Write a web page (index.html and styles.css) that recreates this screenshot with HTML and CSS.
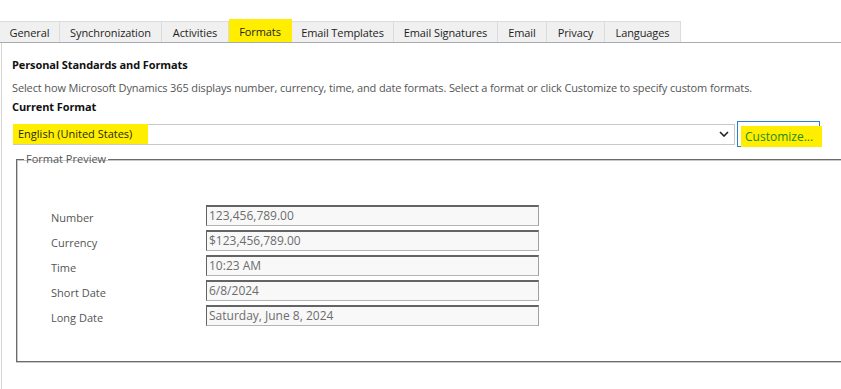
FILE: index.html
```html
<!DOCTYPE html>
<html lang="en">
<head>
    <meta charset="UTF-8">
    <meta name="viewport" content="width=device-width, initial-scale=1.0">
    <title>Set Personal Options</title>
    <link rel="stylesheet" href="styles.css">
</head>
<body>

    <ul class="tabs">
        <li class="tab-general">General</li>
        <li class="tab-sync">Synchronization</li>
        <li class="tab-activities">Activities</li>
        <li class="tab-formats active">Formats</li>
        <li class="tab-templates">Email Templates</li>
        <li class="tab-signatures">Email Signatures</li>
        <li class="tab-email">Email</li>
        <li class="tab-privacy">Privacy</li>
        <li class="tab-languages">Languages</li>
    </ul>

    <div class="panel">
        <h3 class="title">Personal Standards and Formats</h3>
        <p class="desc">Select how Microsoft Dynamics 365 displays number, currency, time, and date formats. Select a format or click Customize to specify custom formats.</p>
        <h3 class="title">Current Format</h3>

        <div class="format-row">
            <div class="select">
                <span class="mark">English (United States)</span>
                <svg class="chevron" width="10" height="6" viewBox="0 0 10 6">
                    <path d="M1 1 L5 5 L9 1" fill="none" stroke="#222" stroke-width="1.6"/>
                </svg>
            </div>
            <div class="customize"><span class="mark green">Customize...</span></div>
        </div>

        <fieldset class="preview">
            <legend>Format Preview</legend>
            <div class="rows">
                <label>Number</label>
                <div class="field">123,456,789.00</div>
                <label>Currency</label>
                <div class="field">$123,456,789.00</div>
                <label>Time</label>
                <div class="field">10:23 AM</div>
                <label>Short Date</label>
                <div class="field">6/8/2024</div>
                <label>Long Date</label>
                <div class="field">Saturday, June 8, 2024</div>
            </div>
        </fieldset>
    </div>

</body>
</html>
```

FILE: styles.css
```css
html,body{
    margin: 0;
    padding: 0;
    background: #fff;
    overflow: hidden;
}
body{
    font-family: "Open Sans", "Noto Sans", sans-serif;
    font-size: 11px;
    color: #222;
}
ul,li{
    list-style: none;
    margin: 0;
    padding: 0;
}
.tabs{
    display: flex;
    margin-top: 21px;
    height: 21px;
    border-bottom: 1px solid #a7abb4;
}
.tabs li{
    box-sizing: border-box;
    height: 21px;
    line-height: 21px;
    text-align: center;
    background: #f0f0f0;
    border-right: 1px solid #dcdcdc;
    border-top: 1px solid #dcdcdc;
    color: #1e1e1e;
    letter-spacing: -0.1px;
}
.tabs .tab-general{ width: 60px; }
.tabs .tab-sync{ width: 102px; }
.tabs .tab-activities{ width: 67px; }
.tabs .tab-formats{ width: 63px; }
.tabs .tab-templates{ width: 102px; }
.tabs .tab-signatures{ width: 104px; }
.tabs .tab-email{ width: 49px; }
.tabs .tab-privacy{ width: 58px; }
.tabs .tab-languages{ width: 76px; }
.tabs li.active{
    background: #ffee00;
    height: 23px;
    line-height: 23px;
    margin-top: -2px;
    border-color: #ffee00;
}

.panel{
    margin-left: 1px;
    border-left: 1px solid #d4d4d4;
    padding: 13px 0 30px 10px;
}
.title{
    margin: 0;
    font-size: 11px;
    font-weight: bold;
    color: #111;
    line-height: 17px;
    letter-spacing: -0.1px;
}
.desc{
    margin: 7px 0 2px;
    color: #555;
    line-height: 16px;
    letter-spacing: -0.13px;
}

.format-row{
    display: flex;
    align-items: center;
    margin-top: 6px;
}
.select{
    box-sizing: border-box;
    width: 722px;
    height: 21px;
    margin-left: 1px;
    border: 1px solid #c8c8c8;
    display: flex;
    align-items: center;
    justify-content: space-between;
    padding-right: 5px;
}
.mark{
    background: #ffee00;
    line-height: 20px;
    padding: 0 16px 0 5px;
    margin-left: -1px;
    color: #2a2a00;
}
.customize{
    box-sizing: border-box;
    width: 83px;
    height: 26px;
    margin-left: 2px;
    border: 1px solid #2a7fd4;
    padding: 4px 0 0 3px;
}
.customize .mark{
    display: block;
    font-size: 12px;
    line-height: 21px;
    padding: 0 0 0 4px;
    margin: 0 -3px 0 0;
    color: #1d8a1d;
}

.preview{
    margin: 6px -20px 0 4px;
    padding: 40px 0 35px 34px;
    border: 1px solid #6b6b6b;
    box-shadow: inset 1px 1px #c8c8c8, 0 1px #c8c8c8;
}
.preview legend{
    color: #555;
    padding: 0 2px;
    margin-left: -27px;
    line-height: 12px;
}
.rows{
    display: grid;
    grid-template-columns: 155px 333px;
    row-gap: 4px;
    align-items: center;
}
.rows label{
    color: #555;
    padding-top: 4px;
}
.field{
    box-sizing: border-box;
    height: 21px;
    line-height: 18px;
    font-size: 12px;
    background: #f8f8f8;
    border-top: 2px solid #646464;
    border-left: 1px solid #646464;
    border-right: 1px solid #a0a0a0;
    border-bottom: 1px solid #b4b4b4;
    color: #6d6d6d;
    padding-left: 2px;
}
```
